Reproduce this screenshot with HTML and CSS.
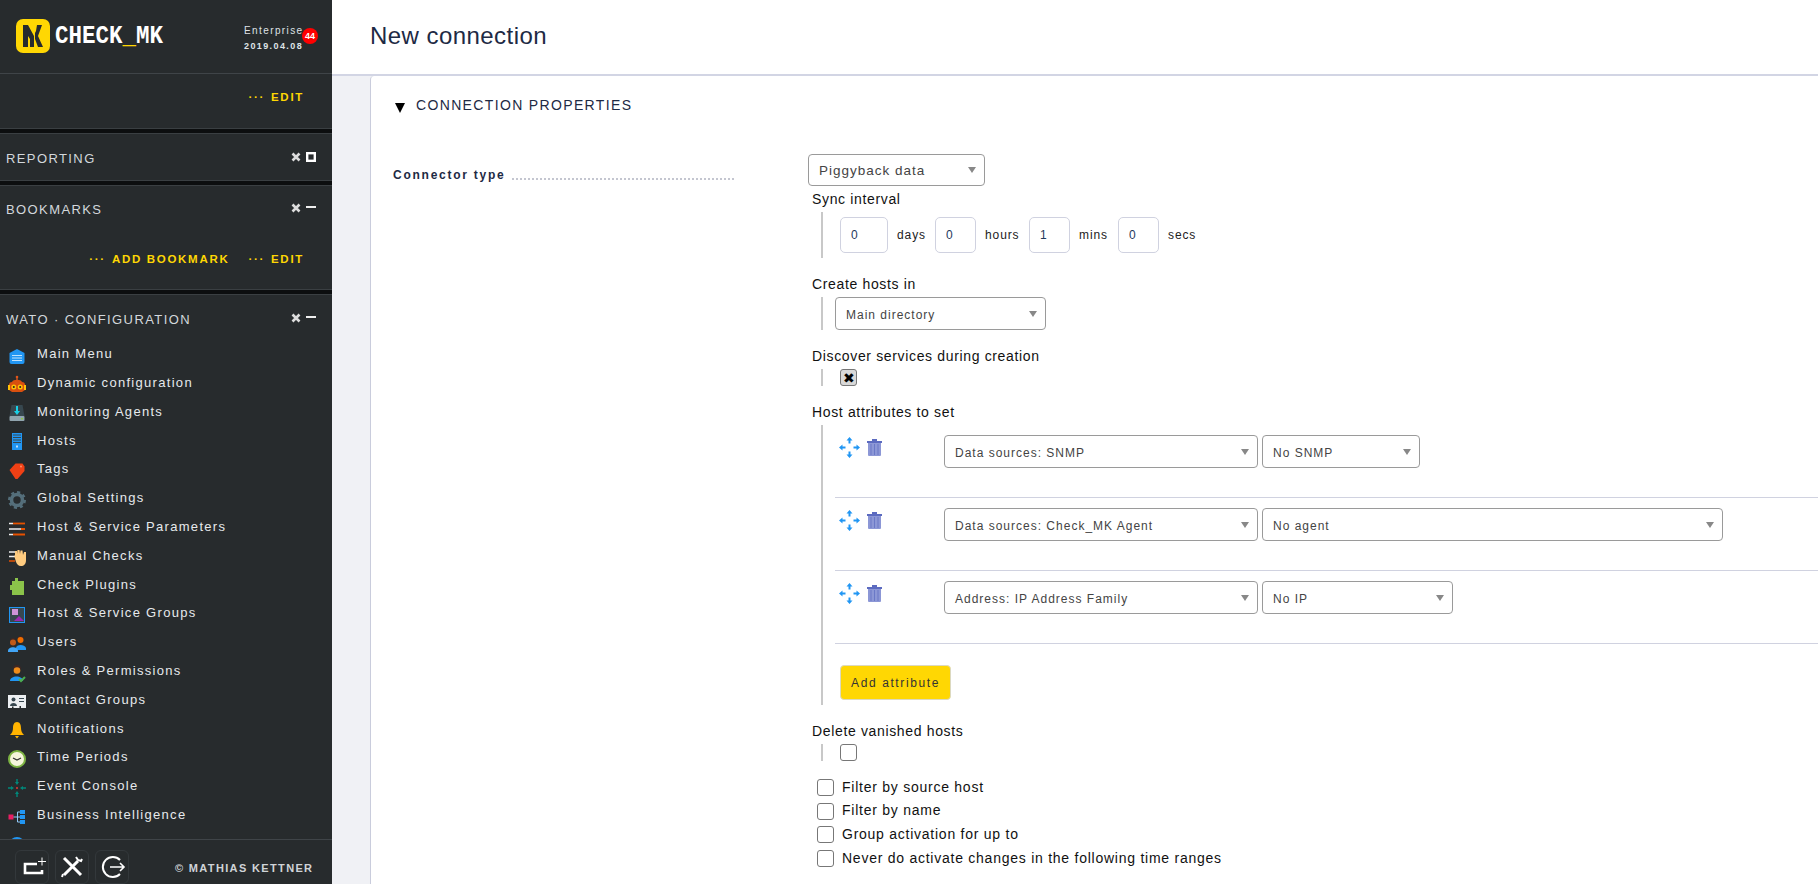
FILE: index.html
```html
<!DOCTYPE html>
<html>
<head>
    <title>New connection</title>
    <link rel="stylesheet" href="styles.css">
</head>
<body>
    <div class="sidebar">
        <div class="side-head">
            <svg class="logo-mark" viewBox="0 0 34 34">
                <rect width="34" height="34" rx="7" fill="#ffd703"/>
                <path fill="#272b2d" d="M7 6h5l6 11v11h-4V20l-2-3v11H7z"/>
                <path fill="#272b2d" d="M21 6h5l-4 11 5 11h-5l-3-8v-6l1-2z"/>
            </svg>
            <div class="logo-text">CHECK<span class="logo-bar">_</span>MK</div>
            <div class="version">
                <div>Enterprise</div>
                <div class="version-date">2019.04.08</div>
                <span class="badge">44</span>
            </div>
        </div>

        <div class="snapins">
            <div class="snapin snapin-first">
                <div class="actions">
                    <a class="action"><span class="dots">···</span>EDIT</a>
                </div>
            </div>
            <div class="snapin snapin-closed">
                <div class="snapin-title">
                    <span>REPORTING</span>
                    <span class="snapin-ctrl">
                        <svg viewBox="0 0 10 10"><path d="M1.500 1.500l7 7M8.500 1.500l-7 7" stroke="#ddd" stroke-width="2.600"/></svg>
                        <svg viewBox="0 0 10 10"><rect x="1.200" y="1.200" width="7.600" height="7.600" fill="none" stroke="#fff" stroke-width="2.400"/></svg>
                    </span>
                </div>
            </div>
            <div class="snapin snapin-bookmarks">
                <div class="snapin-title">
                    <span>BOOKMARKS</span>
                    <span class="snapin-ctrl">
                        <svg viewBox="0 0 10 10"><path d="M1.500 1.500l7 7M8.500 1.500l-7 7" stroke="#ddd" stroke-width="2.600"/></svg>
                        <svg viewBox="0 0 10 10"><rect y="3" width="10" height="2" fill="#eee"/></svg>
                    </span>
                </div>
                <div class="actions actions-bookmarks">
                    <a class="action"><span class="dots">···</span>ADD BOOKMARK</a>
                    <a class="action"><span class="dots">···</span>EDIT</a>
                </div>
            </div>
            <div class="snapin snapin-last">
                <div class="snapin-title">
                    <span>WATO · CONFIGURATION</span>
                    <span class="snapin-ctrl">
                        <svg viewBox="0 0 10 10"><path d="M1.500 1.500l7 7M8.500 1.500l-7 7" stroke="#ddd" stroke-width="2.600"/></svg>
                        <svg viewBox="0 0 10 10"><rect y="3" width="10" height="2" fill="#eee"/></svg>
                    </span>
                </div>
                <ul class="menu">
                    <li><svg viewBox="0 0 20 20"><path fill="#2196f3" d="M10 3l7.500 4v9a2 2 0 0 1-2 2h-11a2 2 0 0 1-2-2V7z"/><path stroke="#bfe3ff" d="M5 9.500h10M5 12h10M5 14.500h10"/></svg>Main Menu</li>
                    <li><svg viewBox="0 0 20 20"><path stroke="#e0551b" stroke-width="1.300" d="M10 5V2.500"/><circle cx="10" cy="2" r="1.300" fill="#e0551b"/><path fill="#d9500f" d="M2 10a3 3 0 0 1 3-3c1-3 9-3 10 0a3 3 0 0 1 3 3v5l-3 2H5l-3-2z"/><rect x="1" y="10" width="2" height="5" fill="#ffc107"/><rect x="17" y="10" width="2" height="5" fill="#ffc107"/><circle cx="6.800" cy="12" r="2.500" fill="#ffc107"/><circle cx="13.200" cy="12" r="2.500" fill="#ffc107"/><circle cx="6.800" cy="12" r="1" fill="#222"/><circle cx="13.200" cy="12" r="1" fill="#222"/></svg>Dynamic configuration</li>
                    <li><svg viewBox="0 0 20 20"><path fill="#37474f" d="M4.500 2h11l2 11H2.500z"/><rect x="2.500" y="13" width="15" height="5" rx="1" fill="#90a4ae"/><rect x="14" y="15" width="2" height="1.500" fill="#8bc34a"/><path fill="#18d1e8" d="M9 3h2v5h2l-3 4-3-4h2z"/></svg>Monitoring Agents</li>
                    <li><svg viewBox="0 0 20 20"><rect x="5" y="1" width="10" height="17" fill="#2196f3"/><path stroke="#37474f" stroke-width="1.200" d="M6 3h8M6 5.500h8M6 8h8M6 10.500h8"/><rect x="9" y="13.500" width="2" height="2" fill="#bbdefb"/></svg>Hosts</li>
                    <li><svg viewBox="0 0 20 20"><path fill="#ef4015" d="M2.500 9l6-6.500h7l2 3v4.500l-7 8h-2z"/><circle cx="14" cy="5.500" r="1" fill="#ff8a65"/></svg>Tags</li>
                    <li><svg viewBox="0 0 20 20"><circle cx="10" cy="10" r="5.500" fill="none" stroke="#546e7a" stroke-width="3.600"/><circle cx="10" cy="10" r="7.800" fill="none" stroke="#546e7a" stroke-width="2.400" stroke-dasharray="3.100 3"/></svg>Global Settings</li>
                    <li><svg viewBox="0 0 20 20"><path stroke="#e65100" stroke-width="1.800" d="M6 4.500h12"/><path stroke="#eee" stroke-width="1.500" d="M2 4.500h4M2 10h12"/><path stroke="#e65100" stroke-width="1.800" d="M14 10h4M6 15.500h12"/><path stroke="#eee" stroke-width="1.500" d="M2 15.500h4"/></svg>Host &amp; Service Parameters</li>
                    <li><svg viewBox="0 0 20 20"><path stroke="#eee" stroke-width="1.500" d="M2 5h7M2 9.500h7"/><path stroke="#e65100" stroke-width="1.500" d="M2 14h6"/><path fill="#ffcc80" d="M7 8l1 1V4h2v3l.5-4h2l.5 4 .5-3.500h2L16 8l1-3h2v8c0 4-2 6-5 6s-4-2-5-4z"/></svg>Manual Checks</li>
                    <li><svg viewBox="0 0 20 20"><path fill="#8bc34a" d="M8 2h3v3h6v14H5v-5H3V9h2V5h3z"/></svg>Check Plugins</li>
                    <li><svg viewBox="0 0 20 20"><rect x="2.500" y="2.500" width="15" height="15" fill="#37474f" stroke="#2196f3"/><rect x="5" y="4" width="6" height="6" fill="#ce93d8"/><path fill="#9c27b0" d="M7 16l5-5 5 5z"/></svg>Host &amp; Service Groups</li>
                    <li><svg viewBox="0 0 20 20"><path fill="#3e2723" d="M10.500 5a3 3 0 0 1 6 0z"/><circle cx="13.500" cy="6" r="3" fill="#ef6c00"/><path fill="#2196f3" d="M9 14c0-4 9-4 10 0v2H9z"/><path fill="#3e2723" d="M3 7a3 3 0 0 1 6 0z"/><circle cx="6" cy="8.500" r="3" fill="#bf5a1a"/><path fill="#42a5f5" d="M1 17c0-5 10-5 10 0v1H1z"/></svg>Users</li>
                    <li><svg viewBox="0 0 20 20"><path fill="#3e2723" d="M6 6a4 4 0 0 1 8 0z"/><circle cx="10" cy="7.500" r="3.300" fill="#ef8c1a"/><path fill="#2196f3" d="M3 18c0-6 13-6 13 0z"/><path fill="none" stroke="#4caf50" stroke-width="2" d="M12 16l2 2 4-4"/></svg>Roles &amp; Permissions</li>
                    <li><svg viewBox="0 0 20 20"><rect x="1" y="4" width="18" height="13" fill="#eceff1"/><circle cx="6.500" cy="8.500" r="2" fill="#37474f"/><path fill="#37474f" d="M3 15c0-4 7-4 7 0zM12 7h5v1h-5zM12 10h5v1h-5z"/><path fill="#272b2d" d="M5 15.500h1.500V17H5zM12.500 15h1.500v2h-1.500z"/></svg>Contact Groups</li>
                    <li><svg viewBox="0 0 20 20"><path fill="#ffb300" d="M10 2c3 0 4 3 4 6 0 3 1 5 3 7H3c2-2 3-4 3-7 0-3 1-6 4-6zM8 16h4l-2 2.500z"/></svg>Notifications</li>
                    <li><svg viewBox="0 0 20 20"><circle cx="10" cy="10" r="8" fill="#f5f5dc" stroke="#7cb342" stroke-width="2"/><path fill="none" stroke="#333" stroke-width="1.200" d="M6 9l4 2 4-2"/></svg>Time Periods</li>
                    <li><svg viewBox="0 0 20 20"><path fill="#00897b" d="M9.300 1h1.400v3H12l-2 3-2-3h1.300zM9.300 19h1.400v-3H12l-2-3-2 3h1.300zM1 9.300v1.400h3V12l3-2-3-2v1.300zM19 9.300v1.400h-3V12l-3-2 3-2v1.300z"/><circle cx="10" cy="10" r="1" fill="#e53935"/></svg>Event Console</li>
                    <li><svg viewBox="0 0 20 20"><rect x="1.500" y="7.500" width="5" height="5" fill="#e91e63"/><path fill="none" stroke="#90caf9" d="M6.500 10h4M10.500 5v10M10.500 5h3M10.500 15h3M10.500 10h3"/><rect x="13" y="3" width="5" height="4" fill="#2196f3"/><rect x="13" y="8" width="5" height="4" fill="#2196f3"/><rect x="13" y="13" width="5" height="4" fill="#2196f3"/></svg>Business Intelligence</li>
                    <li><svg viewBox="0 0 20 20"><circle cx="10" cy="10" r="8" fill="#2196f3"/></svg></li>
                </ul>
            </div>
        </div>

        <div class="side-foot">
            <a class="foot-btn"><svg viewBox="0 0 32 32"><path fill="none" stroke="#fff" stroke-width="2.600" d="M21 13H9v9h17v-3"/><path stroke="#fff" d="M22 10.500h8M26 6.500v8"/></svg></a>
            <a class="foot-btn"><svg viewBox="0 0 32 32"><path stroke="#fff" stroke-width="3" d="M8 7l17 17M22 10L8 24"/><path fill="none" stroke="#fff" stroke-width="2" d="M20 6l2 3 3 1 1-2M6 26l1-3"/></svg></a>
            <a class="foot-btn"><svg viewBox="0 0 32 32"><path fill="none" stroke="#fff" stroke-width="2" d="M24 9a10 10 0 1 0 0 14"/><path fill="none" stroke="#fff" stroke-width="1.600" d="M14 16h14M24 12l4 4-4 4"/></svg></a>
            <span class="copyright">© MATHIAS KETTNER</span>
        </div>
    </div>

    <div class="main">
        <div class="page-head">New connection</div>
        <div class="card">
            <div class="section-head"><span class="section-arrow"></span>CONNECTION PROPERTIES</div>

            <div class="form">
                <div class="form-label"><b>Connector type</b><span class="leader"></span></div>
                <div class="form-value">
                    <div class="select select-big select-connector"><span>Piggyback data</span><i class="arrow"></i></div>

                    <div class="dict dict-first">
                        <div class="dict-title">Sync interval</div>
                        <div class="dict-body age">
                            <input class="num num-days" value="0"><span>days</span>
                            <input class="num" value="0"><span class="age-hours">hours</span>
                            <input class="num" value="1"><span class="age-mins">mins</span>
                            <input class="num" value="0"><span>secs</span>
                        </div>
                    </div>

                    <div class="dict">
                        <div class="dict-title">Create hosts in</div>
                        <div class="dict-body dict-body-select">
                            <div class="select select-folder"><span>Main directory</span><i class="arrow"></i></div>
                        </div>
                    </div>

                    <div class="dict">
                        <div class="dict-title">Discover services during creation</div>
                        <div class="dict-body dict-body-check">
                            <label class="check check-on">✖</label>
                        </div>
                    </div>

                    <div class="dict">
                        <div class="dict-title">Host attributes to set</div>
                        <div class="dict-body attrs">
                            <div class="attr-row">
                                <div class="attr-ctrl">
                                    <svg class="move" viewBox="0 0 21 21"><path fill="#2196f3" d="M10.500 0l3 3.500h-2v3h-2v-3h-2zM10.500 21l3-3.500h-2v-3h-2v3h-2zM0 10.500L3.500 7.500v2h3v2h-3v2zM21 10.500l-3.500-3v2h-3v2h3v2z"/></svg>
                                    <svg class="trash" viewBox="0 0 15 18"><path fill="#5c6bc0" d="M0 3h15v2H0zM5 1h5v2H5z"/><path fill="#8c97d6" d="M1 5h13v12a1 1 0 0 1-1 1H2a1 1 0 0 1-1-1z"/><path stroke="#5c6bc0" stroke-width=".7" d="M4 6v11M7.500 6v11M11 6v11"/></svg>
                                </div>
                                <div class="select select-attr"><span>Data sources: SNMP</span><i class="arrow"></i></div>
                                <div class="select select-snmp"><span>No SNMP</span><i class="arrow"></i></div>
                            </div>
                            <div class="attr-row">
                                <div class="attr-ctrl">
                                    <svg class="move" viewBox="0 0 21 21"><path fill="#2196f3" d="M10.500 0l3 3.500h-2v3h-2v-3h-2zM10.500 21l3-3.500h-2v-3h-2v3h-2zM0 10.500L3.500 7.500v2h3v2h-3v2zM21 10.500l-3.500-3v2h-3v2h3v2z"/></svg>
                                    <svg class="trash" viewBox="0 0 15 18"><path fill="#5c6bc0" d="M0 3h15v2H0zM5 1h5v2H5z"/><path fill="#8c97d6" d="M1 5h13v12a1 1 0 0 1-1 1H2a1 1 0 0 1-1-1z"/><path stroke="#5c6bc0" stroke-width=".7" d="M4 6v11M7.500 6v11M11 6v11"/></svg>
                                </div>
                                <div class="select select-attr"><span>Data sources: Check_MK Agent</span><i class="arrow"></i></div>
                                <div class="select select-agent"><span>No agent</span><i class="arrow"></i></div>
                            </div>
                            <div class="attr-row">
                                <div class="attr-ctrl">
                                    <svg class="move" viewBox="0 0 21 21"><path fill="#2196f3" d="M10.500 0l3 3.500h-2v3h-2v-3h-2zM10.500 21l3-3.500h-2v-3h-2v3h-2zM0 10.500L3.500 7.500v2h3v2h-3v2zM21 10.500l-3.500-3v2h-3v2h3v2z"/></svg>
                                    <svg class="trash" viewBox="0 0 15 18"><path fill="#5c6bc0" d="M0 3h15v2H0zM5 1h5v2H5z"/><path fill="#8c97d6" d="M1 5h13v12a1 1 0 0 1-1 1H2a1 1 0 0 1-1-1z"/><path stroke="#5c6bc0" stroke-width=".7" d="M4 6v11M7.500 6v11M11 6v11"/></svg>
                                </div>
                                <div class="select select-attr"><span>Address: IP Address Family</span><i class="arrow"></i></div>
                                <div class="select select-ip"><span>No IP</span><i class="arrow"></i></div>
                            </div>
                            <button class="btn-add">Add attribute</button>
                        </div>
                    </div>

                    <div class="dict">
                        <div class="dict-title">Delete vanished hosts</div>
                        <div class="dict-body dict-body-check">
                            <label class="check"></label>
                        </div>
                    </div>

                    <div class="filters">
                        <div class="filter"><label class="check"></label>Filter by source host</div>
                        <div class="filter"><label class="check"></label>Filter by name</div>
                        <div class="filter"><label class="check"></label>Group activation for up to</div>
                        <div class="filter"><label class="check"></label>Never do activate changes in the following time ranges</div>
                    </div>
                </div>
            </div>
        </div>
    </div>
</body>
</html>
```
FILE: styles.css
```css
* {
    box-sizing: border-box;
}
body {
    margin: 0;
    height: 884px;
    display: flex;
    overflow: hidden;
    font-family: "Liberation Sans", Arial, sans-serif;
    background-color: #f0f1f5;
}

/* sidebar */
.sidebar {
    width: 332px;
    height: 884px;
    flex-shrink: 0;
    display: flex;
    flex-direction: column;
    background-color: #272b2d;
    color: #e6e9ec;
}
.side-head {
    height: 74px;
    flex-shrink: 0;
    display: flex;
    padding: 19px 0 0 16px;
    border-bottom: 1px solid #3f4448;
}
.logo-mark {
    width: 34px;
    height: 34px;
}
.logo-text {
    margin: 2px 0 0 5px;
    width: 189px;
    font-family: "Liberation Mono", monospace;
    font-weight: bold;
    font-size: 25px;
    line-height: 32px;
    color: #fff;
    transform: scaleX(0.9);
    transform-origin: left;
}
.logo-bar {
    color: #ffd703;
}
.version {
    position: relative;
    margin-top: 4px;
    width: 58px;
    font-size: 10px;
    line-height: 15.5px;
    letter-spacing: 1.4px;
    text-align: right;
    white-space: nowrap;
    color: #dfe3e6;
}
.version-date {
    font-weight: bold;
    font-size: 9px;
    letter-spacing: 1.4px;
}
.badge {
    position: absolute;
    left: 58px;
    top: 5px;
    width: 16px;
    height: 16px;
    border-radius: 50%;
    background-color: #f00;
    color: #fff;
    font-size: 9px;
    font-weight: bold;
    line-height: 16px;
    letter-spacing: 0;
    text-align: center;
}
.snapins {
    flex: 1;
    min-height: 0;
    overflow: hidden;
    background-color: #0c0e0f;
}
.snapin {
    background-color: #272b2d;
    border-bottom: 1px solid #3a3f42;
    border-top: 1px solid #3a3f42;
    margin-bottom: 4px;
}
.snapin-first {
    border-top: none;
}
.snapin-closed {
    padding-bottom: 2px;
}
.snapin-last {
    margin-bottom: 0;
    border-bottom: none;
    height: 560px;
}
.snapin-title {
    height: 44px;
    padding: 4px 16px 0 6px;
    display: flex;
    align-items: center;
    justify-content: space-between;
    font-size: 13px;
    letter-spacing: 1.4px;
    color: #d3d8dc;
}
.snapin-bookmarks .snapin-title {
    padding-top: 2px;
}
.snapin-ctrl {
    display: flex;
    gap: 5px;
    margin-top: -3px;
}
.snapin-ctrl svg {
    width: 10px;
    height: 10px;
}
.actions {
    height: 54px;
    padding: 13px 28px 0 0;
    display: flex;
    justify-content: flex-end;
    gap: 19px;
}
.actions-bookmarks {
    height: 59px;
    padding-top: 19px;
}
.action {
    font-size: 11.5px;
    font-weight: bold;
    line-height: 20px;
    letter-spacing: 1.7px;
    color: #ffd703;
}
.dots {
    margin-right: 6px;
}
.menu {
    list-style: none;
    margin: 0.4px 0 0;
    padding: 0;
}
.menu li {
    height: 28.8px;
    display: flex;
    align-items: center;
    gap: 10px;
    padding-left: 7px;
    font-size: 13px;
    letter-spacing: 1.3px;
    white-space: nowrap;
}
.menu svg {
    width: 20px;
    height: 20px;
    flex-shrink: 0;
    margin-top: 4px;
}
.side-foot {
    height: 45px;
    flex-shrink: 0;
    display: flex;
    align-items: flex-start;
    gap: 6px;
    padding: 10px 0 0 15px;
    border-top: 1px solid #3f4448;
}
.foot-btn {
    width: 34px;
    height: 34px;
    border: 1px solid #33383b;
    border-radius: 6px;
}
.foot-btn svg {
    display: block;
    width: 32px;
    height: 32px;
}
.copyright {
    margin-left: 40px;
    font-size: 11px;
    font-weight: bold;
    line-height: 36px;
    letter-spacing: 1.35px;
    color: #d0d4d8;
}

/* main */
.main {
    flex: 1;
    min-width: 0;
}
.page-head {
    height: 76px;
    padding: 21px 0 0 38px;
    background-color: #fff;
    border-bottom: 2px solid #d2d5e4;
    font-size: 24px;
    line-height: 30px;
    letter-spacing: 0.45px;
    color: #1e2a44;
}
.card {
    margin-left: 38px;
    height: 808px;
    padding: 0 0 0 22px;
    background-color: #fff;
    border-left: 1px solid #c9ccdc;
    border-top-left-radius: 4px;
}
.section-head {
    height: 78px;
    padding-top: 20px;
    font-size: 14px;
    line-height: 18px;
    letter-spacing: 1.35px;
    color: #1e2a44;
    display: flex;
    align-items: flex-start;
}
.section-arrow {
    width: 0;
    height: 0;
    margin: 7px 11px 0 2px;
    border-left: 5.5px solid transparent;
    border-right: 5.5px solid transparent;
    border-top: 10px solid #000;
}
.form {
    display: flex;
}
.form-label {
    width: 415px;
    flex-shrink: 0;
    padding-top: 12px;
    display: flex;
    font-size: 12px;
    line-height: 18px;
    letter-spacing: 1.75px;
    color: #1e2a44;
}
.leader {
    width: 223px;
    height: 2px;
    margin: 12px 0 0 6px;
    background-image: linear-gradient(to right, #c4c6d0 2px, transparent 2px);
    background-size: 4px 2px;
}
.form-value {
    flex: 1;
    min-width: 0;
}
.select {
    height: 33px;
    display: flex;
    align-items: center;
    justify-content: space-between;
    padding: 0 8px 0 10px;
    border: 1px solid #9a9a9a;
    border-radius: 4px;
    background-color: #fff;
    font-size: 12px;
    letter-spacing: 1px;
    color: #444;
}
.select span {
    margin-top: 2px;
}
.select-big {
    font-size: 13.5px;
    letter-spacing: 1px;
    height: 32px;
}
.select-big span {
    margin-top: 0;
}
.select-connector {
    width: 177px;
}
.select-folder {
    width: 211px;
}
.select-attr {
    width: 314px;
}
.select-snmp {
    width: 158px;
    margin-left: 4px;
}
.select-agent {
    width: 461px;
    margin-left: 4px;
}
.select-ip {
    width: 191px;
    margin-left: 4px;
}
.arrow {
    width: 0;
    height: 0;
    border-left: 4px solid transparent;
    border-right: 4px solid transparent;
    border-top: 6px solid #888;
}
.dict {
    margin-top: 16px;
}
.dict-first {
    margin-top: 3px;
}
.dict-title {
    height: 23px;
    padding-left: 4px;
    font-size: 14px;
    line-height: 21px;
    letter-spacing: 0.65px;
    color: #111;
}
.dict-body {
    margin-left: 13px;
    padding-left: 12px;
    border-left: 2px solid #c8c8c8;
}
.age {
    height: 46px;
    padding: 5px 0 0 17px;
    display: flex;
    align-items: flex-start;
    font-size: 12px;
    line-height: 36px;
    letter-spacing: 0.9px;
    color: #222;
}
.age span {
    width: 47px;
    padding-left: 9px;
    flex-shrink: 0;
}
.age .age-hours {
    width: 53px;
}
.age .age-mins {
    width: 48px;
}
.num {
    width: 41px;
    height: 36px;
    padding: 0 0 0 10px;
    border: 1px solid #d0d2e0;
    border-radius: 5px;
    font-family: inherit;
    font-size: 12px;
    color: #1f3a5c;
    outline: none;
}
.num-days {
    width: 48px;
}
.dict-body-select {
    height: 33px;
}
.dict-body-check {
    height: 17px;
    padding-left: 17px;
}
.check {
    display: flex;
    align-items: center;
    justify-content: center;
    width: 17px;
    height: 17px;
    border: 1px solid #777;
    border-radius: 3px;
    background-color: #fff;
    flex-shrink: 0;
    font-size: 14px;
    color: #000;
}
.check-on {
    background-color: #d8d8d8;
}
.attrs {
    height: 280px;
}
.attr-row {
    display: flex;
    align-items: flex-start;
    height: 73px;
    padding-top: 10px;
    border-bottom: 1px solid #d0d2e0;
}
.attr-ctrl {
    width: 109px;
    flex-shrink: 0;
    display: flex;
    align-items: flex-start;
    gap: 7px;
    padding: 2px 0 0 4px;
}
.move {
    width: 21px;
    height: 21px;
}
.trash {
    width: 15px;
    height: 18px;
    margin-top: 1px;
}
.btn-add {
    display: block;
    width: 111px;
    height: 35px;
    margin: 21px 0 0 5px;
    padding: 0;
    background-color: #ffd703;
    border: 1px solid #dcd9c0;
    border-radius: 4px;
    font-family: inherit;
    font-size: 12px;
    letter-spacing: 1.6px;
    color: #333;
}
.filters {
    margin-top: 14px;
    padding-left: 9px;
}
.filter {
    height: 23.6px;
    display: flex;
    align-items: center;
    gap: 8px;
    font-size: 14px;
    letter-spacing: 0.75px;
    color: #111;
}
.filter .check {
    margin-top: 2px;
}
```
